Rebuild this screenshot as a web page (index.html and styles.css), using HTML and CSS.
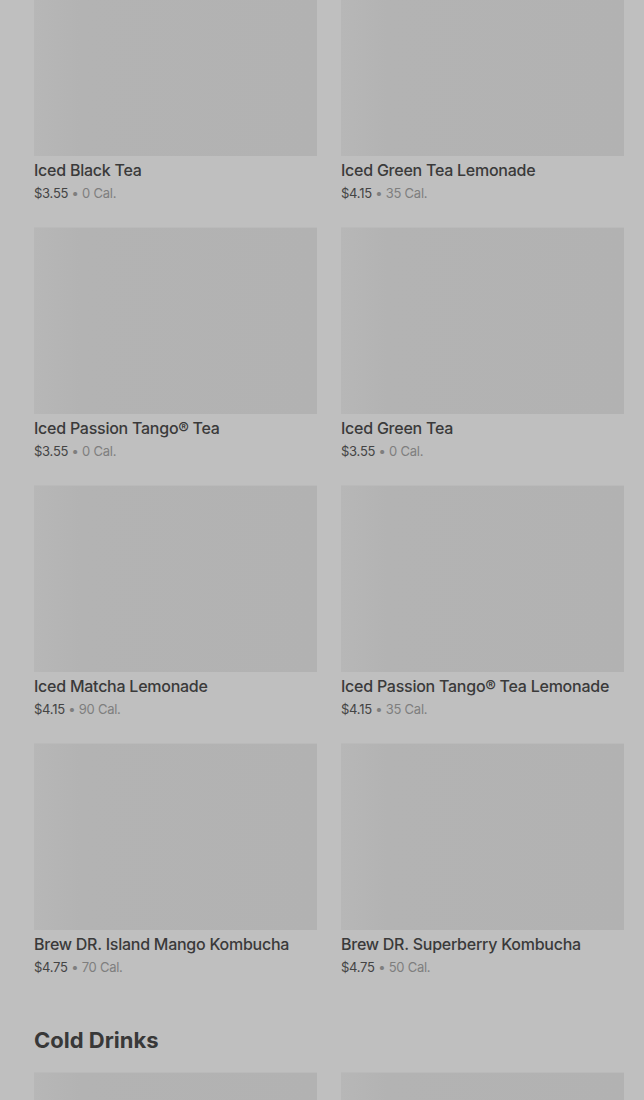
FILE: index.html
```html
<!DOCTYPE html>
<html lang="en">

<head>
    <meta charset="UTF-8">
    <meta name="viewport" content="width=device-width, initial-scale=1.0">
    <title>Menu</title>
    <link rel="stylesheet" href="styles.css">
</head>

<body>
    <div class="menu-page">
        <section class="menu-section">
            <div class="product-grid">
                <div class="product-card">
                    <div class="product-image"></div>
                    <h3 class="product-name">Iced Black Tea</h3>
                    <p class="product-meta"><span class="price">$3.55</span> • 0 Cal.</p>
                </div>
                <div class="product-card">
                    <div class="product-image"></div>
                    <h3 class="product-name">Iced Green Tea Lemonade</h3>
                    <p class="product-meta"><span class="price">$4.15</span> • 35 Cal.</p>
                </div>
                <div class="product-card">
                    <div class="product-image"></div>
                    <h3 class="product-name">Iced Passion Tango® Tea</h3>
                    <p class="product-meta"><span class="price">$3.55</span> • 0 Cal.</p>
                </div>
                <div class="product-card">
                    <div class="product-image"></div>
                    <h3 class="product-name">Iced Green Tea</h3>
                    <p class="product-meta"><span class="price">$3.55</span> • 0 Cal.</p>
                </div>
                <div class="product-card">
                    <div class="product-image"></div>
                    <h3 class="product-name">Iced Matcha Lemonade</h3>
                    <p class="product-meta"><span class="price">$4.15</span> • 90 Cal.</p>
                </div>
                <div class="product-card">
                    <div class="product-image"></div>
                    <h3 class="product-name">Iced Passion Tango® Tea Lemonade</h3>
                    <p class="product-meta"><span class="price">$4.15</span> • 35 Cal.</p>
                </div>
                <div class="product-card">
                    <div class="product-image"></div>
                    <h3 class="product-name">Brew DR. Island Mango Kombucha</h3>
                    <p class="product-meta"><span class="price">$4.75</span> • 70 Cal.</p>
                </div>
                <div class="product-card">
                    <div class="product-image"></div>
                    <h3 class="product-name">Brew DR. Superberry Kombucha</h3>
                    <p class="product-meta"><span class="price">$4.75</span> • 50 Cal.</p>
                </div>
            </div>
        </section>

        <section class="menu-section">
            <h2 class="section-title">Cold Drinks</h2>
            <div class="product-grid">
                <div class="product-card">
                    <div class="product-image"></div>
                </div>
                <div class="product-card">
                    <div class="product-image"></div>
                </div>
            </div>
        </section>
    </div>
</body>

</html>
```

FILE: styles.css
```css
body {
    font-family: Inter, 'Noto Sans', sans-serif;
    background-color: #bfbfbf;
    color: #3a3a3a;
    margin: 0;
    padding: 0;
    overflow: hidden;
}

.menu-page {
    /* page is scrolled a little past the first row */
    margin-top: -31px;
    padding: 0 20px 0 34px;
}

.product-grid {
    display: grid;
    grid-template-columns: 283px 283px;
    column-gap: 24px;
    row-gap: 22px;
}

.product-image {
    height: 187px;
    background: linear-gradient(90deg, #b7b7b7 0, #b3b3b3 46px, #b2b2b2 100%);
    border-top: 1px solid #bababa;
    box-sizing: border-box;
}

.product-name {
    margin: 0;
    padding-top: 3px;
    font-size: 16px;
    font-weight: 500;
    line-height: 22px;
    color: #3a3a3a;
    letter-spacing: -0.25px;
}

.product-meta {
    margin: 0;
    font-size: 13px;
    line-height: 24px;
    color: #7e7e7e;
    letter-spacing: -0.25px;
}

.price {
    color: #444;
}

.section-title {
    margin: 46px 0 17px;
    font-size: 22px;
    font-weight: 700;
    line-height: 30px;
    color: #383838;
    letter-spacing: 0;
}
```
